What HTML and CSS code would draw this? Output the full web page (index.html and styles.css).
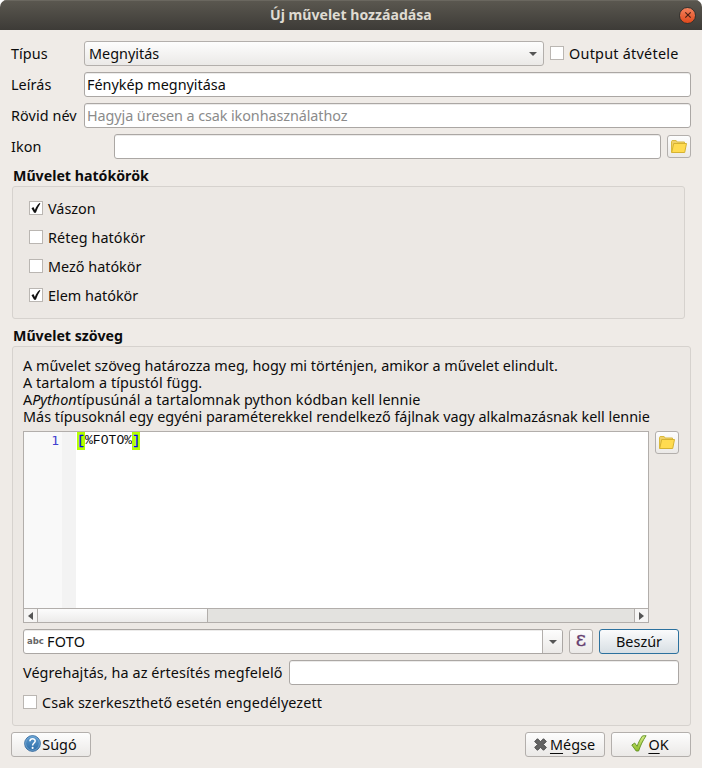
FILE: index.html
```html
<!DOCTYPE html>
<html lang="hu">
<head>
<meta charset="utf-8">
<title>Új művelet hozzáadása</title>
<link rel="stylesheet" href="styles.css">
</head>
<body>
<svg class="defs" width="0" height="0">
  <symbol id="folder" viewBox="0 0 16 14">
    <path d="M.5 12.5V1.5l.6-1h4l1 1.5h7.4v2" fill="#f0d068" stroke="#d9b93d"/>
    <path d="M2.7 3.5h12.8l-1.8 9H.7z" fill="#ffdb50" stroke="#d5b232"/>
  </symbol>
  <symbol id="check" viewBox="0 0 12 12">
    <path d="M1.5 6.3 3.4 5l1.5 3C6 5 7.6 2.6 9.6 1l.8.5C8.500 4.300 7.200 7.200 5.900 10.700H4.100z" fill="#111"/>
  </symbol>
</svg>
<div class="window">
  <header class="titlebar">
    <span class="title">Új művelet hozzáadása</span>
    <span class="close"><svg width="8" height="8" viewBox="0 0 8 8"><path d="M1.300 1.300 6.700 6.700M6.700 1.300 1.300 6.700" stroke="#4a2115" stroke-width="1.200"/></svg></span>
  </header>
  <main class="content">
    <div class="row">
      <label class="lbl">Típus</label>
      <div class="select raised"><span>Megnyitás</span><i class="down"></i></div>
      <span class="check out"><i class="box"></i><span class="spread">Output átvétele</span></span>
    </div>
    <div class="row"><label class="lbl">Leírás</label><div class="input"><span>Fénykép megnyitása</span></div></div>
    <div class="row"><label class="lbl">Rövid név</label><div class="input hint"><span>Hagyja üresen a csak ikonhasználathoz</span></div></div>
    <div class="row"><label class="lbl wide">Ikon</label><div class="input"></div><div class="tool raised"><svg width="16" height="14"><use href="#folder"/></svg></div></div>

    <h2>Művelet hatókörök</h2>
    <section class="group scopes">
      <span class="check"><i class="box"><svg width="12" height="12"><use href="#check"/></svg></i><span>Vászon</span></span>
      <span class="check"><i class="box"></i><span class="loose">Réteg hatókör</span></span>
      <span class="check"><i class="box"></i><span>Mező hatókör</span></span>
      <span class="check"><i class="box"><svg width="12" height="12"><use href="#check"/></svg></i><span>Elem hatókör</span></span>
    </section>

    <h2>Művelet szöveg</h2>
    <section class="group action">
      <div class="info">
        <p>A művelet szöveg határozza meg, hogy mi történjen, amikor a művelet elindult.</p>
        <p class="loose">A tartalom a típustól függ.</p>
        <p class="mixed"><span>A</span><em>Python</em><span class="loose">típusúnál a tartalomnak python kódban kell lennie</span></p>
        <p>Más típusoknál egy egyéni paraméterekkel rendelkező fájlnak vagy alkalmazásnak kell lennie</p>
      </div>
      <div class="editrow">
        <div class="editor">
          <div class="code">
            <div class="nums">1</div>
            <div class="fold"></div>
            <div class="line"><b>[</b><span>%FOTO%</span><b>]</b></div>
          </div>
          <div class="scroll">
            <span class="sbtn"><svg width="6" height="8" viewBox="0 0 6 8"><path d="M5 0v8L0 4z" fill="#555"/></svg></span>
            <span class="thumb"></span>
            <span class="sbtn end"><svg width="6" height="8" viewBox="0 0 6 8"><path d="M0 0v8l5-4z" fill="#555"/></svg></span>
          </div>
        </div>
        <div class="tool raised"><svg width="16" height="14"><use href="#folder"/></svg></div>
      </div>
      <div class="row insert">
        <div class="input combo"><span class="abc">abc</span><span class="spread">FOTO</span><span class="drop"><i class="down"></i></span></div>
        <div class="tool tall raised"><span class="eps">ε</span></div>
        <div class="btn raised primary"><span>Beszúr</span></div>
      </div>
      <div class="row cond"><label class="loose">Végrehajtás, ha az értesítés megfelelő</label><div class="input"></div></div>
      <span class="check only"><i class="box"></i><span class="loose">Csak szerkeszthető esetén engedélyezett</span></span>
    </section>

    <footer class="row">
      <div class="btn raised help"><svg width="17" height="17" viewBox="0 0 17 17"><defs><linearGradient id="blue" x2="0" y2="1"><stop stop-color="#5c9bd0"/><stop offset="1" stop-color="#2d6ca6"/></linearGradient></defs><circle cx="8.500" cy="8.500" r="7.900" fill="url(#blue)" stroke="#30669a" stroke-width=".8"/><circle cx="8.500" cy="8.500" r="6.900" fill="none" stroke="#8db9de" stroke-width=".6"/><path d="M5.900 6.200c.2-3.200 5.300-3.100 5.300-.2 0 2-2.600 2-2.600 4.400" fill="none" stroke="#fff" stroke-width="1.500"/><circle cx="8.600" cy="12.900" r="1.050" fill="#fff"/></svg><span>Súgó</span></div>
      <div class="btn raised cancel"><svg width="13" height="13" viewBox="0 0 13 13"><path d="M3.500.7 6.500 3.700 9.500.7l2.800 2.800-3 3 3 3-2.800 2.800-3-3-3 3L.7 9.500l3-3-3-3z" fill="#646464" stroke="#414141" stroke-width=".9" stroke-linejoin="round"/></svg><span><u>M</u>égse</span></div>
      <div class="btn raised ok"><svg width="16" height="17" viewBox="0 0 16 17"><defs><linearGradient id="green" x2="0" y2="1"><stop stop-color="#d7ee88"/><stop offset="1" stop-color="#8dbd28"/></linearGradient></defs><path d="M.8 10 3.700 8l2.400 3.400C7.400 7.600 9.200 3.900 11.500.9L15.100.7C11.800 5.500 9.500 10.400 7.600 16H5.200z" fill="url(#green)" stroke="#5f8f1f" stroke-width=".9" stroke-linejoin="round"/></svg><span><u>O</u>K</span></div>
    </footer>
  </main>
</div>
</body>
</html>
```
FILE: styles.css
```css
* { box-sizing: border-box; }
body { margin: 0; background: #fff; font: 14.4px/17px "Noto Sans", "Open Sans", sans-serif; color: #0c0c0c; }
.defs { position: absolute; }
svg { display: block; flex: none; }
.window { width: 702px; height: 768px; background: #efebe7; border-radius: 7px 7px 0 0; overflow: hidden; white-space: nowrap; }
.titlebar { height: 30px; display: flex; align-items: center; justify-content: flex-end; padding-right: 6px; background: linear-gradient(#5b5850, #3d3b37); box-shadow: inset 0 1px #6a675f; color: #dfdbd2; font-size: 14.1px; font-weight: 700; }
.title { flex: 1; padding: 0 0 1px 270px; }
.close { width: 17px; height: 17px; border-radius: 50%; display: flex; align-items: center; justify-content: center; background: linear-gradient(#f3825e, #e0491b); border: 1px solid #35332f; }
.content { padding: 11px 11px 0; }
.row { display: flex; gap: 6px; height: 25px; align-items: center; margin-bottom: 6px; }
.lbl { width: 67px; flex: none; letter-spacing: .08px; }
.lbl.wide { width: 97px; }
.loose { letter-spacing: .08px; }
.spread { letter-spacing: .25px; }
.raised { background: linear-gradient(#fdfdfd, #ebe9e7); border: 1px solid #b3afac; border-radius: 3px; }
.input, .select { height: 25px; flex: 1; min-width: 0; display: flex; align-items: center; }
.input { background: #fff; border: 1px solid #aba7a4; border-radius: 3px; padding-left: 2px; box-shadow: inset 0 1px #ecebea; }
.hint { color: #8b8b8b; letter-spacing: -.09px; }
.select { justify-content: space-between; padding: 0 6px 0 4px; }
.down { border: solid transparent; border-width: 4px 4px 0; border-top-color: #555; }
.check { display: flex; align-items: center; gap: 5px; height: 17px; }
.out { width: 141px; }
.box { width: 14px; height: 14px; background: #fff; border: 1px solid #bab6b2; flex: none; margin-bottom: 1px; }
.tool { width: 24px; height: 23px; display: flex; align-items: center; justify-content: center; flex: none; }
.tool.tall { height: 25px; }
h2 { font: inherit; font-size: 14.2px; font-weight: 700; margin: 8px 0 2px 2px; height: 17px; }
.group { margin-left: 1px; border: 1px solid #d6d2ce; border-radius: 3px; background: #ece8e4; }
.scopes { width: 673px; height: 133px; padding: 13px 16px; display: flex; flex-direction: column; gap: 12px; }
.action { height: 380px; padding: 10px 11px 0 10px; }
.info { height: 74px; }
p { margin: 0; }
.mixed { display: flex; }
.editrow { display: flex; gap: 6px; height: 192px; margin-bottom: 6px; }
.editor { width: 626px; border: 1px solid #b2aeab; display: flex; flex-direction: column; background: #fff; }
.code { flex: 1; display: flex; font: 13px/18px "Liberation Mono", monospace; }
.nums { width: 38px; background: #f9f9f9; color: #4141d0; text-align: right; padding-right: 3px; font-family: "DejaVu Sans Mono", monospace; }
.fold { width: 14px; background: #f3f3f3; }
.line { padding-left: 1px; display: flex; letter-spacing: .06px; }
.line b { height: 18px; width: 8px; background: #b4ff00; color: #0000ff; font-weight: 400; -webkit-text-stroke: .3px #0000ff; }
.scroll { height: 14px; border-top: 1px solid #b2aeab; display: flex; background: #e3e2df; }
.sbtn { width: 14px; display: flex; align-items: center; justify-content: center; background: #f6f5f4; border-right: 1px solid #b2aeab; }
.thumb { width: 170px; background: linear-gradient(#fcfcfc, #ecebea); border-right: 1px solid #b2aeab; }
.end { margin-left: auto; border-right: 0; border-left: 1px solid #b2aeab; }
.combo { padding-left: 3px; }
.abc { font: 700 8.500px/10px "DejaVu Sans", sans-serif; color: #666; width: 20px; padding-bottom: 2px; }
.drop { margin-left: auto; width: 20px; height: 23px; border-left: 1px solid #b3afac; background: linear-gradient(#fdfdfd, #ebe9e7); border-radius: 0 2px 2px 0; display: flex; align-items: center; justify-content: center; }
.eps { font: 20px/20px "DejaVu Serif", serif; color: #65406f; margin-top: -5px; -webkit-text-stroke: .3px #65406f; }
.btn { width: 80px; height: 25px; display: flex; align-items: center; justify-content: center; gap: 1px; flex: none; }
.primary { border-color: #2c719e; background: linear-gradient(#fafbfc, #d8dfe4); }
.cond label { width: 260px; flex: none; }
.only { margin-top: 9px; }
footer.row { margin-top: 6px; }
.btn svg { margin-bottom: 2px; }
.help { gap: 1px; padding-right: 1px; }
.cancel { margin-left: auto; gap: 3px; padding-right: 1px; }
.cancel svg { margin-bottom: 1px; }
.ok { padding-right: 2px; }
u { text-underline-offset: 3px; text-decoration-thickness: 1px; }
```
